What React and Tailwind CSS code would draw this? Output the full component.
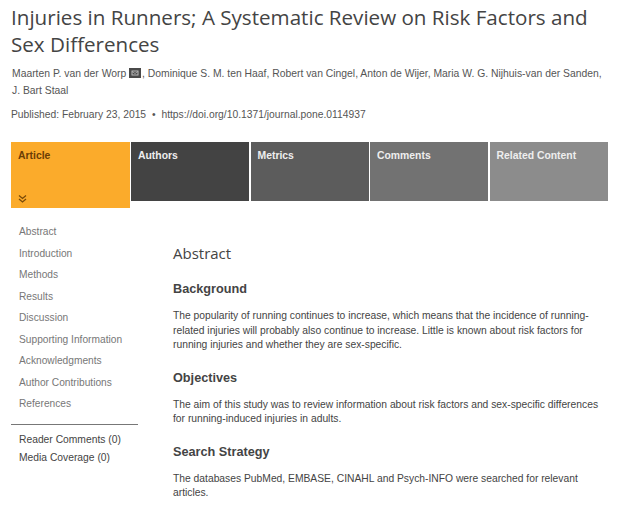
const sideLinks = [
  'Abstract',
  'Introduction',
  'Methods',
  'Results',
  'Discussion',
  'Supporting Information',
  'Acknowledgments',
  'Author Contributions',
  'References',
]

const tabs = [
  { name: 'Authors', color: 'bg-[#434343]' },
  { name: 'Metrics', color: 'bg-[#5c5c5c]' },
  { name: 'Comments', color: 'bg-[#727272]' },
  { name: 'Related Content', color: 'bg-[#8c8c8c]' },
]

const sections = [
  {
    title: 'Background',
    lines: [
      'The popularity of running continues to increase, which means that the incidence of running-',
      'related injuries will probably also continue to increase. Little is known about risk factors for',
      'running injuries and whether they are sex-specific.',
    ],
  },
  {
    title: 'Objectives',
    lines: [
      'The aim of this study was to review information about risk factors and sex-specific differences',
      'for running-induced injuries in adults.',
    ],
  },
  {
    title: 'Search Strategy',
    lines: [
      'The databases PubMed, EMBASE, CINAHL and Psych-INFO were searched for relevant',
      'articles.',
    ],
  },
]

function MailIcon() {
  return (
    <svg width="12" height="10" viewBox="0 0 12 10" className="mr-[1px] inline-block align-[-1px]">
      <rect width="12" height="10" fill="#4a4a4a" />
      <rect x="3" y="3" width="6" height="4" fill="none" stroke="#bbb" strokeWidth="1" />
      <path d="M3 3.5 6 5.5 9 3.5" fill="none" stroke="#bbb" strokeWidth="0.7" />
    </svg>
  )
}

export default function App() {
  return (
    <div className="h-[505px] w-[640px] overflow-hidden bg-white font-['Liberation_Sans',sans-serif] text-[#333]">
      <div className="px-[11px] pt-[4px]">
        <h1 className="font-['Open_Sans',sans-serif] text-[20.6px] leading-[27px] text-[#444]">
          Injuries in Runners; A Systematic Review on Risk Factors and
          <br />
          Sex Differences
        </h1>
        <p className="mt-[7px] pl-[1px] text-[10.36px] leading-[17px] whitespace-nowrap text-[#555]">
          Maarten P. van der Worp <MailIcon />, Dominique S. M. ten Haaf, Robert van Cingel, Anton de Wijer, Maria W. G. Nijhuis-van der Sanden,
          <br />
          J. Bart Staal
        </p>
        <p className="mt-[9px] text-[10.3px] leading-[14px] text-[#555]">
          Published: February 23, 2015 <span className="mx-[3px]">•</span> https://doi.org/10.1371/journal.pone.0114937
        </p>
      </div>

      <div className="mt-[20px] flex items-start pl-[11px]">
        <div className="flex h-[66px] w-[119px] flex-col justify-between bg-[#fbab2b] px-[7px] pt-[6px] pb-[5px] text-[10.4px] font-bold text-[#6b3d05]">
          <span>Article</span>
          <svg width="9" height="9" viewBox="0 0 9 9" fill="none" stroke="#7a4a08" strokeWidth="1.3">
            <path d="M1 1.5 4.5 4.5 8 1.5M1 5 4.5 8 8 5" />
          </svg>
        </div>
        <div className="ml-[1px] flex gap-[1.5px]">
          {tabs.map((tab) => (
            <div key={tab.name} className={`h-[59px] w-[118px] px-[7px] pt-[6px] text-[10.4px] font-bold text-[#eee] ${tab.color}`}>
              {tab.name}
            </div>
          ))}
        </div>
      </div>

      <div className="flex">
        <aside className="ml-[11px] w-[127px] pt-[13px]">
          <ul className="border-b border-[#777] pb-[9px]">
            {sideLinks.map((link) => (
              <li key={link} className="pl-[8px] text-[10.2px] leading-[21.5px] text-[#777]">{link}</li>
            ))}
          </ul>
          <div className="pt-[6px] pl-[8px] text-[10.3px] leading-[18px] text-[#444]">
            <div>Reader Comments (0)</div>
            <div>Media Coverage (0)</div>
          </div>
        </aside>
        <main className="ml-[35px] flex-1 pt-[34px]">
          <h2 className="font-['Open_Sans',sans-serif] text-[15px] leading-[22px] text-[#444]">Abstract</h2>
          {sections.map((section) => (
            <section key={section.title} className="mt-[16px]">
              <h3 className="text-[12.7px] leading-[18px] font-bold text-[#444]">{section.title}</h3>
              <p className="mt-[11px] text-[10.3px] leading-[14.5px] whitespace-nowrap text-[#444]">
                {section.lines.map((line) => (
                  <span key={line} className="block">{line}</span>
                ))}
              </p>
            </section>
          ))}
        </main>
      </div>
    </div>
  )
}
